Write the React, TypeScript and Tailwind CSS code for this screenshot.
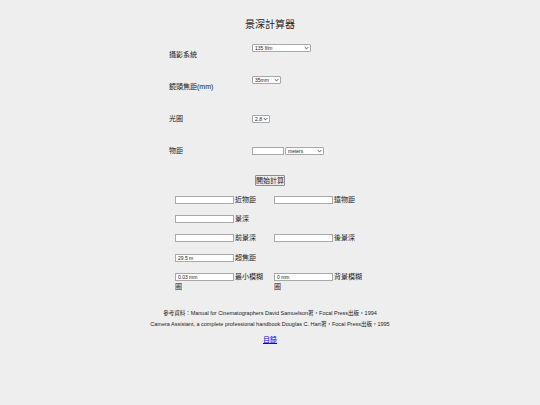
import React from "react";

const font = { fontFamily: '"Liberation Sans", "Noto Sans CJK TC", sans-serif' };

const Chevron: React.FC = () => (
    <svg viewBox="0 0 8 5" className="absolute right-[2px] top-1/2 -translate-y-1/2 w-[5px] h-[3px] pointer-events-none">
        <path d="M1 1 L4 4 L7 1" fill="none" stroke="#333" strokeWidth="1.4" />
    </svg>
);

const Select: React.FC<{ value: string; options: string[]; width: string }> = ({ value, options, width }) => (
    <div className={`relative block h-[8px] ${width}`}>
        <select
            defaultValue={value}
            className="appearance-none w-full h-full bg-white border border-[#a9a9a9] rounded-[1px] text-[5px] leading-[6px] pl-[2px] text-[#222] outline-none block"
            style={font}
        >
            {options.map((o) => (
                <option key={o}>{o}</option>
            ))}
        </select>
        <Chevron />
    </div>
);

const Box: React.FC<{ value?: string; width?: string }> = ({ value = "", width = "w-[59px]" }) => (
    <input
        readOnly
        value={value}
        className={`${width} h-[8px] bg-white border border-[#a9a9a9] text-[5px] pl-[2px] text-[#222] align-middle outline-none`}
        style={font}
    />
);

const ResultCell: React.FC<{ label: string; value?: string }> = ({ label, value }) => (
    <div className="w-[99px] pr-[6px] text-[7px] leading-[10px] text-[#222]">
        <Box value={value} />
        <span className="ml-[1px] align-middle">{label}</span>
    </div>
);

const App: React.FC = () => {
    const rows = [
        { label: "攝影系統", control: <Select value="135 film" options={["135 film", "120 film", "4x5"]} width="w-[59px]" />, up: true },
        { label: "鏡頭焦距(mm)", control: <Select value="35mm" options={["35mm", "50mm", "85mm"]} width="w-[29px]" />, up: true },
        { label: "光圈", control: <Select value="2.8" options={["2.8", "4", "5.6"]} width="w-[18px]" />, up: false },
        {
            label: "物距",
            control: (
                <div className="flex items-center gap-[1px]">
                    <Box width="w-[32px]" />
                    <Select value="meters" options={["meters", "feet"]} width="w-[39px]" />
                </div>
            ),
            up: false,
        },
    ];

    return (
        <div className="w-[540px] min-h-[405px] bg-[#eeeeee] text-[#222]" style={font}>
            <h1 className="pt-[19px] text-center text-[10px] leading-[12px] font-normal mb-[8px]">景深計算器</h1>

            <div className="mx-auto w-[202px]">
                {rows.map((row, i) => (
                    <div key={i} className="grid grid-cols-[83px_1fr] items-center h-[32px]">
                        <span className="text-[7px] leading-[10px]">{row.label}</span>
                        <div className={`flex items-center leading-none ${row.up ? "mb-[14px]" : ""}`}>{row.control}</div>
                    </div>
                ))}
            </div>

            <div className="flex justify-center mt-[8px]">
                <button className="w-[30px] h-[11px] bg-[#efefef] border border-[#8f8f8f] rounded-[1px] text-[7px] leading-[9px] text-[#222] p-0">
                    開始計算
                </button>
            </div>

            <div className="flex justify-center pl-[8px] mt-[9px]">
                <div className="w-[198px] flex flex-col gap-[9px]">
                    <div className="flex">
                        <ResultCell label="近物距" />
                        <ResultCell label="遠物距" />
                    </div>
                    <div className="flex">
                        <ResultCell label="景深" />
                    </div>
                    <div className="flex">
                        <ResultCell label="前景深" />
                        <ResultCell label="後景深" />
                    </div>
                    <div className="flex">
                        <ResultCell label="超焦距" value="29.5 m" />
                    </div>
                    <div className="flex">
                        <ResultCell label="最小模糊圈" value="0.03 mm" />
                        <ResultCell label="背景模糊圈" value="0 mm" />
                    </div>
                </div>
            </div>

            <div className="mt-[16px] text-center text-[5.5px] leading-[11px]">
                <p>參考資料：Manual for Cinematographers David Samuelson著，Focal Press出版，1994</p>
                <p>Camera Assistant, a complete professional handbook Douglas C. Hart著，Focal Press出版，1995</p>
            </div>

            <div className="mt-[5px] text-center text-[7px] leading-[10px]">
                <a href="#" className="text-[#0000ee] underline">目錄</a>
            </div>
        </div>
    );
};

export default App;
